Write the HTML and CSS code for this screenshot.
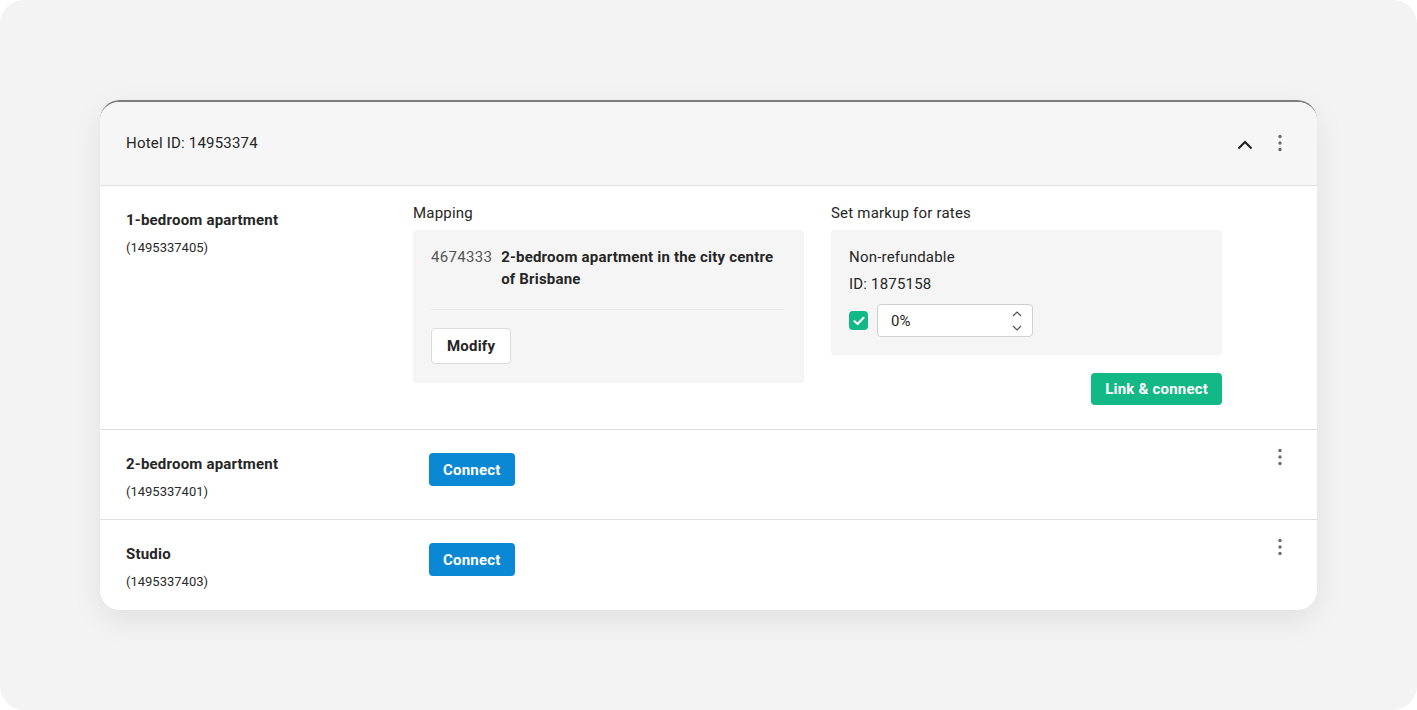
FILE: index.html
```html
<!DOCTYPE html>
<html lang="en">
<head>
    <meta charset="UTF-8">
    <meta name="viewport" content="width=device-width, initial-scale=1.0">
    <title>Hotel rooms mapping</title>
    <link rel="stylesheet" href="styles.css">
</head>
<body>
    <div class="frame">
        <div class="card">
            <div class="card-header">
                <span class="hotel-id">Hotel ID: 14953374</span>
                <div class="header-actions">
                    <svg class="chevron" width="20" height="20" viewBox="0 0 20 20"><path d="M3.5 13.5 L10 7 L16.5 13.5" fill="none" stroke="#1f1f1f" stroke-width="2"/></svg>
                    <svg class="kebab" width="6" height="18" viewBox="0 0 6 18"><circle cx="3" cy="2.5" r="1.7" fill="#6b6b6b"/><circle cx="3" cy="9" r="1.7" fill="#6b6b6b"/><circle cx="3" cy="15.5" r="1.7" fill="#6b6b6b"/></svg>
                </div>
            </div>

            <!-- habitacion abierta -->
            <div class="room room-open">
                <div class="room-name">
                    <div class="name">1-bedroom apartment</div>
                    <div class="room-id">(1495337405)</div>
                </div>
                <div class="col">
                    <div class="col-label">Mapping</div>
                    <div class="panel mapping-panel">
                        <div class="mapped">
                            <span class="mapped-code">4674333</span>
                            <span class="mapped-name">2-bedroom apartment in the city centre of Brisbane</span>
                        </div>
                        <div class="divider"></div>
                        <button class="btn btn-white">Modify</button>
                    </div>
                </div>
                <div class="col">
                    <div class="col-label">Set markup for rates</div>
                    <div class="panel markup-panel">
                        <div class="rate-name">Non-refundable</div>
                        <div class="rate-id">ID: 1875158</div>
                        <div class="markup-row">
                            <span class="check">
                                <svg width="12" height="10" viewBox="0 0 12 10"><path d="M1.5 5.2 L4.6 8 L10.5 1.8" fill="none" stroke="#fff" stroke-width="2.2" stroke-linecap="round" stroke-linejoin="round"/></svg>
                            </span>
                            <div class="number-input">
                                <span>0%</span>
                                <svg width="12" height="24" viewBox="0 0 12 24"><path d="M2 7 L6 3 L10 7" fill="none" stroke="#555" stroke-width="1.2"/><path d="M2 17 L6 21 L10 17" fill="none" stroke="#555" stroke-width="1.2"/></svg>
                            </div>
                        </div>
                    </div>
                    <div class="actions">
                        <button class="btn btn-green">Link &amp; connect</button>
                    </div>
                </div>
            </div>

            <div class="room">
                <div class="room-name">
                    <div class="name">2-bedroom apartment</div>
                    <div class="room-id">(1495337401)</div>
                </div>
                <div class="col-connect">
                    <button class="btn btn-blue">Connect</button>
                </div>
                <svg class="kebab room-kebab" width="6" height="18" viewBox="0 0 6 18"><circle cx="3" cy="2.5" r="1.7" fill="#6b6b6b"/><circle cx="3" cy="9" r="1.7" fill="#6b6b6b"/><circle cx="3" cy="15.5" r="1.7" fill="#6b6b6b"/></svg>
            </div>

            <div class="room">
                <div class="room-name">
                    <div class="name">Studio</div>
                    <div class="room-id">(1495337403)</div>
                </div>
                <div class="col-connect">
                    <button class="btn btn-blue">Connect</button>
                </div>
                <svg class="kebab room-kebab" width="6" height="18" viewBox="0 0 6 18"><circle cx="3" cy="2.5" r="1.7" fill="#6b6b6b"/><circle cx="3" cy="9" r="1.7" fill="#6b6b6b"/><circle cx="3" cy="15.5" r="1.7" fill="#6b6b6b"/></svg>
            </div>
        </div>
    </div>
</body>
</html>
```

FILE: styles.css
```css
/* Fondo de la pagina */
body, html {
    margin: 0;
    height: 100%;
    background-color: #ffffff;
    font-family: Roboto, "Liberation Sans", Arial, sans-serif;
    color: #1f1f1f;
}

.frame {
    height: 710px;
    background-color: #f3f3f4;
    border-radius: 24px;
    display: flex;
    justify-content: center;
    align-items: center;
}

/* Tarjeta principal */
.card {
    width: 1217px;
    background-color: #ffffff;
    border-radius: 20px;
    border-top: 2px solid #7c7c7c;
    box-shadow: 0px 10px 30px rgba(0, 0, 0, 0.08);
    overflow: hidden;
}

.card-header {
    background-color: #f6f6f6;
    border-bottom: 1px solid #e0e0e0;
    display: flex;
    align-items: center;
    justify-content: space-between;
    padding: 0 34px 2px 26px;
    box-sizing: border-box;
    height: 84px;
}

.hotel-id {
    font-size: 15px;
    letter-spacing: 0.2px;
    color: #262626;
}

.header-actions {
    display: flex;
    align-items: center;
    gap: 22px;
}

.chevron {
    margin-top: 5px;
}

/* Filas de habitaciones */
.room {
    display: flex;
    padding: 24px 34px 18px 26px;
    border-bottom: 1px solid #e0e0e0;
}

.room:last-child {
    border-bottom: none;
    padding-bottom: 19px;
}

.room-open {
    padding-bottom: 24px;
}

.room-name {
    width: 287px;
}

.name {
    font-size: 15px;
    font-weight: bold;
    line-height: 20px;
    letter-spacing: 0.2px;
    color: #262626;
}

.room-id {
    font-size: 13px;
    line-height: 18px;
    margin-top: 9px;
    color: #2a2a2a;
}

.col {
    width: 391px;
    margin-right: 27px;
    margin-top: -7px;
}

.col-label {
    font-size: 15px;
    line-height: 20px;
    letter-spacing: 0.2px;
    margin-bottom: 7px;
    color: #262626;
}

.panel {
    background-color: #f5f5f5;
    border-radius: 4px;
}

.mapping-panel {
    padding: 16px 20px 19px 18px;
}

.mapped {
    display: flex;
    gap: 9px;
    font-size: 15px;
    line-height: 22px;
    letter-spacing: 0.2px;
}

.mapped-code {
    color: #555555;
    letter-spacing: 0.3px;
}

.mapped-name {
    font-weight: bold;
    color: #262626;
}

.divider {
    height: 1px;
    background-color: #e8e8e8;
    margin: 19px 0 18px 0;
}

.markup-panel {
    padding: 17px 18px 18px 18px;
}

.rate-name, .rate-id {
    font-size: 15px;
    line-height: 20px;
    letter-spacing: 0.2px;
    color: #262626;
}

.rate-id {
    margin-top: 7px;
}

.markup-row {
    display: flex;
    align-items: center;
    gap: 9px;
    margin-top: 10px;
}

.check {
    width: 19px;
    height: 19px;
    border-radius: 4px;
    background-color: #12b886;
    display: flex;
    justify-content: center;
    align-items: center;
}

.number-input {
    width: 132px;
    height: 31px;
    background-color: #ffffff;
    border: 1px solid #cfcfcf;
    border-radius: 4px;
    display: flex;
    align-items: center;
    justify-content: space-between;
    padding: 0 9px 0 13px;
    font-size: 15px;
}

.actions {
    display: flex;
    justify-content: flex-end;
    margin-top: 18px;
}

/* Botones */
.btn {
    font-family: Roboto, "Liberation Sans", Arial, sans-serif;
    font-size: 15px;
    font-weight: bold;
    letter-spacing: 0.2px;
    border-radius: 4px;
    cursor: pointer;
    padding: 0 15px;
}

.btn-white {
    height: 36px;
    background-color: #ffffff;
    border: 1px solid #dcdcdc;
    color: #262626;
}

.btn-green {
    height: 32px;
    background-color: #12b886;
    border: none;
    color: #ffffff;
    padding: 0 14px;
}

.btn-blue {
    height: 33px;
    background-color: #0a88d3;
    border: none;
    color: #ffffff;
    padding: 0 14px;
}

.col-connect {
    flex: 1;
    padding-left: 16px;
    margin-top: -1px;
}

.room-kebab {
    margin-top: -6px;
}
```
